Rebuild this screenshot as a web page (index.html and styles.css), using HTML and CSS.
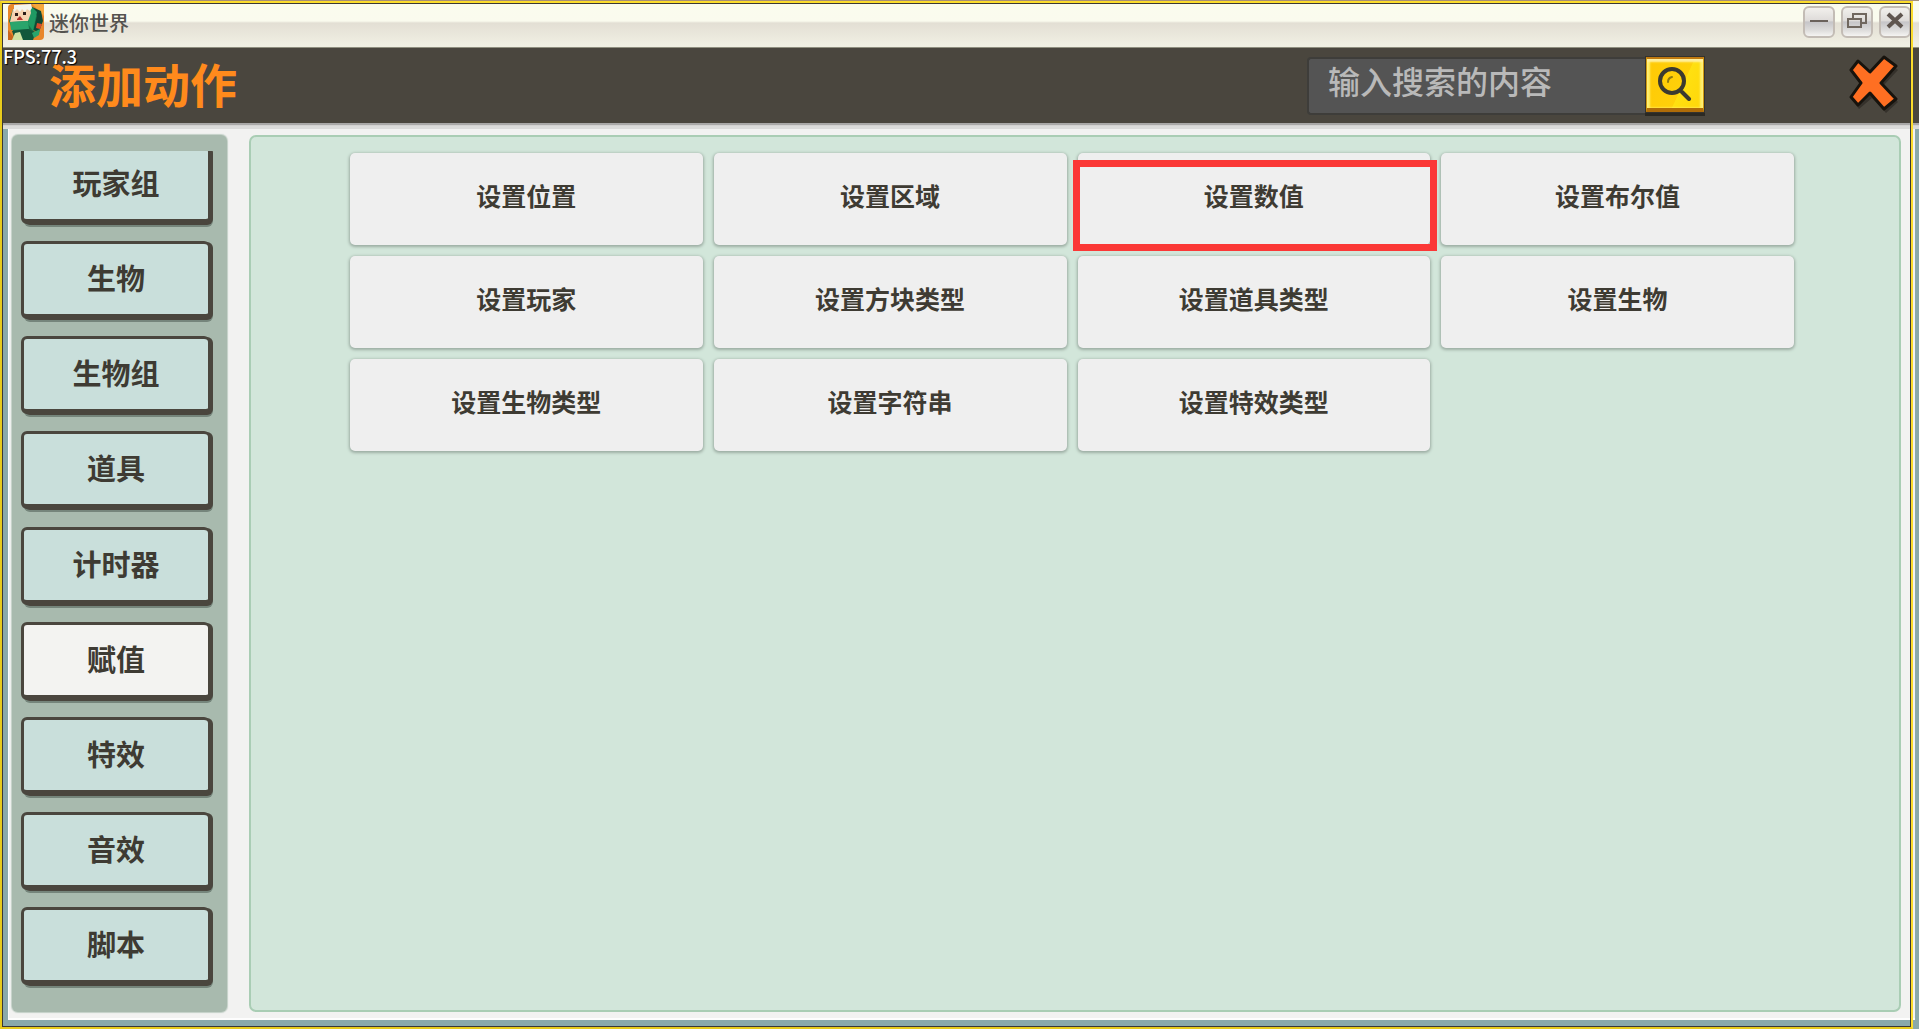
FILE: index.html
```
<!DOCTYPE html>
<html lang="zh-CN">
<head>
    <meta charset="UTF-8">
    <meta name="viewport" content="width=device-width, initial-scale=1.0">
    <title>迷你世界</title>
    <link rel="stylesheet" href="styles.css">
</head>
<body>
<div class="window">
    <div class="titlebar">
        <svg class="app-icon" viewBox="0 0 36 36">
            <rect width="36" height="36" rx="4" fill="#e8862a"/>
            <path d="M24 0h12v12z" fill="#f6a83c"/>
            <path d="M0 26l8 10H0z" fill="#c9651c"/>
            <path d="M24 3l9 4 2 10-4 11-10-3z" fill="#0f4a35"/>
            <path d="M1 17l4-12 19-1 5 8-4 16-20-1z" fill="#17724a"/>
            <path d="M23 2l6 6-4 19-5-7z" fill="#1f9a63"/>
            <path d="M5 5l17-2 1 6-3 8-18 1z" fill="#f5d3b0"/>
            <path d="M6 1l17-1 1 4-2 3-3-2-2 3-3-3-2 3-3-3-3 3z" fill="#f3f5ee"/>
            <path d="M7 9h3v3H7zM15 8h3v3h-3z" fill="#2c1d18"/>
            <path d="M9 15l3-3 3 4H9z" fill="#b4332a"/>
            <path d="M2 18l18-1 1 8-18 1z" fill="#2aa56c"/>
            <path d="M4 27l16-2 8 3-3 8H7z" fill="#12583c"/>
            <path d="M7 29l5-1 3 8H4z" fill="#cfe3a2"/>
            <path d="M29 19l5 1-2 5-4-1z" fill="#d94c2b"/>
            <path d="M24 29l8-4-1 6-5 3z" fill="#2aa56c"/>
        </svg>
        <span class="app-name">迷你世界</span>
        <div class="window-controls">
            <button type="button" aria-label="最小化">
                <svg viewBox="0 0 32 32"><path d="M7 15h18" stroke="#6b625c" stroke-width="2"/></svg>
            </button>
            <button type="button" aria-label="还原">
                <svg viewBox="0 0 32 32" fill="none" stroke="#70675f" stroke-width="2"><path d="M12 12V8h13v9h-4"/><path d="M7 13h13v8H7z"/></svg>
            </button>
            <button type="button" aria-label="关闭窗口">
                <svg viewBox="0 0 32 32"><path d="M9 8l14 13M23 8L9 21" stroke="#5f554f" stroke-width="4"/></svg>
            </button>
        </div>
    </div>

    <header class="header">
        <span class="fps">FPS:77.3</span>
        <h1>添加动作</h1>
        <form class="search">
            <input type="text" placeholder="输入搜索的内容" aria-label="输入搜索的内容">
            <button type="button" aria-label="搜索">
                <svg viewBox="0 0 36 36" fill="none" stroke="#3b3a30" stroke-linecap="round"><circle cx="15" cy="16" r="12" stroke-width="4"/><path d="M25 27l7 7" stroke-width="4"/><path d="M11 17q0-4 4-5" stroke="#8d7a10" stroke-width="2"/></svg>
            </button>
        </form>
        <button type="button" class="close" aria-label="关闭">
            <svg viewBox="0 0 50 60">
                <path d="M11 8L3 17l11 14L3 45l7 9 13-11 14 15 12-11-15-16 15-16L37 4 23 18z" fill="#0d0b08" opacity=".35"/>
                <path d="M9 6L2 15l10 13L2 42l7 8 12-12 14 16 12-10-15-16 15-17L35 2 21 17z" fill="#ff6f22" stroke="#17130d" stroke-width="3" stroke-linejoin="round"/>
            </svg>
        </button>
    </header>

    <div class="content">
        <nav class="sidebar">
            <div class="categories">
                <button type="button">玩家组</button>
                <button type="button">生物</button>
                <button type="button">生物组</button>
                <button type="button">道具</button>
                <button type="button">计时器</button>
                <button type="button" class="active">赋值</button>
                <button type="button">特效</button>
                <button type="button">音效</button>
                <button type="button">脚本</button>
            </div>
        </nav>
        <main class="panel">
            <div class="actions">
                <button type="button">设置位置</button>
                <button type="button">设置区域</button>
                <button type="button" class="marked">设置数值</button>
                <button type="button">设置布尔值</button>
                <button type="button">设置玩家</button>
                <button type="button">设置方块类型</button>
                <button type="button">设置道具类型</button>
                <button type="button">设置生物</button>
                <button type="button">设置生物类型</button>
                <button type="button">设置字符串</button>
                <button type="button">设置特效类型</button>
            </div>
        </main>
    </div>
</div>
<div class="frame"></div>
</body>
</html>
```
FILE: styles.css
```
* {
    box-sizing: border-box;
}

body {
    margin: 0;
    font-family: "Noto Sans CJK SC", sans-serif;
    color: #3e3b33;
    background: #8aa9aa;
}

button {
    margin: 0;
    padding: 0;
    border: none;
    font-family: inherit;
    color: inherit;
    cursor: pointer;
}

button svg {
    display: block;
}

.window {
    display: flex;
    flex-direction: column;
    height: 100vh;
    border-top: 1px solid #a58f78;
}

/* yellow capture frame around the whole window */
.frame {
    position: fixed;
    inset: 1px 6px 0 0;
    z-index: 5;
    border: 2px solid #fbdc2c;
    border-bottom-color: #e8cb1c;
    border-left-color: #e8cb1c;
    box-shadow: inset 0 0 0 1px #3a3836;
    pointer-events: none;
}

/* title bar */
.titlebar {
    display: flex;
    align-items: flex-start;
    height: 47px;
    padding: 3px 8px;
    background: linear-gradient(#fafcee 0, #fafbee 20px, #e3dfd4 22px, #f0efe3 44px, #f0efe3 100%);
    border-bottom: 1px solid #8f8f80;
}

.app-icon {
    width: 36px;
    height: 36px;
}

.app-name {
    margin-left: 5px;
    font-size: 20px;
    font-weight: 500;
    line-height: 37px;
    color: #55534f;
}

.window-controls {
    display: flex;
    gap: 6px;
    margin-left: auto;
    padding-top: 2px;
}

.window-controls button {
    width: 32px;
    height: 32px;
    border: 2px solid #c3bcb5;
    border-radius: 6px;
    background: linear-gradient(#f2f0ec 0, #dedbd9 45%, #c6c5c8 50%, #dedddc 80%, #f5f4f2 100%);
}

.window-controls svg {
    width: 32px;
    height: 32px;
    margin: -2px;
}

/* header */
.header {
    position: relative;
    z-index: 1;
    display: flex;
    align-items: center;
    height: 75px;
    padding: 0 20px 0 49px;
    background: #4a463e;
    box-shadow: 0 2px 1px #a9a8a7, 0 6px 0 #dbdbda;
}

.header h1 {
    margin: 0;
    padding-bottom: 6px;
    font-size: 47px;
    font-weight: 700;
    line-height: 68px;
    color: #ff8a1c;
}

.fps {
    position: absolute;
    top: 0;
    left: 3px;
    z-index: 1;
    font-size: 18px;
    font-weight: 500;
    line-height: 16px;
    color: #fff;
    text-shadow: 1px 1px 1px #000;
}

.search {
    display: flex;
    align-items: flex-start;
    margin-left: auto;
}

.search input {
    width: 339px;
    height: 58px;
    padding: 0 19px 12px;
    border: 2px solid #3e3d3a;
    border-right: none;
    border-radius: 4px 0 0 4px;
    background: #545454;
    font-family: inherit;
    font-size: 32px;
    font-weight: 500;
    color: #fff;
    outline: none;
}

.search input::placeholder {
    color: #b9b9b9;
}

.search button {
    display: grid;
    place-items: center;
    width: 58px;
    height: 55px;
    border: solid;
    border-width: 2px 1px 4px;
    border-color: #c07a10 #d19c10 #b06c08;
    background: linear-gradient(115deg, #ffc905 0, #ffd00a 60%, #ffe010 61%, #ffd60a 100%);
    box-shadow: inset 0 3px 2px #fff0a0, inset 3px 0 2px #ffef6a, inset -3px 0 2px #ffef6a, 0 0 0 1px #35332e, 0 3px 0 1px #2b2923;
}

.search button svg {
    width: 36px;
    height: 36px;
}

.close {
    width: 50px;
    height: 60px;
    margin: 0 0 2px 145px;
    background: none;
}

/* content */
.content {
    flex: 1;
    display: flex;
    gap: 22px;
    min-height: 0;
    margin: 0 4px 9px 8px;
    padding: 12px 14px 6px 3px;
    background: #f2f2f1;
    border: solid #fdfdfd;
    border-width: 0 0 2px 1px;
}

.sidebar {
    width: 215px;
    padding: 16px 14px 24px 9px;
    background: #a8baae;
    border-radius: 6px;
    box-shadow: 0 0 1px 1px #c3d0c7;
}

.categories {
    display: flex;
    flex-direction: column;
    justify-content: space-between;
    height: 100%;
    overflow: hidden;
    padding: 0 3px 3px 0;
}

.categories button {
    flex: none;
    height: 78px;
    padding-bottom: 4px;
    border: 3px solid #4a463e;
    border-bottom-width: 5px;
    border-right-width: 2px;
    border-radius: 6px;
    background: #c9dfdb;
    box-shadow: 3px 1px 0 #4a463e, 3px 3px 0 #75857b;
    font-size: 29px;
    font-weight: 700;
    line-height: 58px;
}

/* list is scrolled a little, the first item is cut at the top */
.categories button:first-child {
    margin-top: -5px;
}

.categories button.active {
    background: #f3f3f1;
}

.panel {
    flex: 1;
    padding: 16px 105px 16px 99px;
    background: #d2e6da;
    border: 2px solid #a9cdb4;
    border-radius: 7px;
}

.actions {
    display: grid;
    grid-template-columns: repeat(4, 1fr);
    gap: 11px;
}

.actions button {
    position: relative;
    height: 92px;
    padding-bottom: 8px;
    background: #efefef;
    border-radius: 5px;
    box-shadow: 0 1px 3px 1px #9cada3;
    font-size: 25px;
    font-weight: 700;
}

.actions button.marked::after {
    content: "";
    position: absolute;
    inset: 7px -7px -6px -5px;
    border: 7px solid #fb3836;
}

.actions button:hover {
    background: #f7f7f7;
}
```
